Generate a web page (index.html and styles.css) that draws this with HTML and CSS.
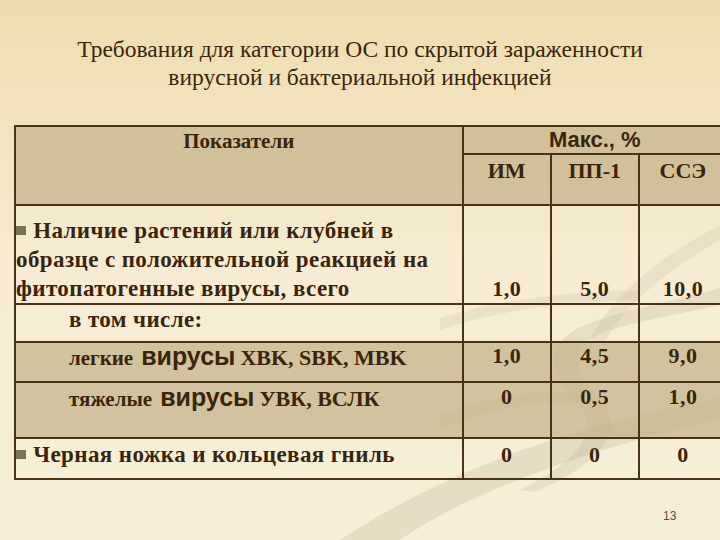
FILE: index.html
```html
<!DOCTYPE html>
<html lang="ru">
<head>
<meta charset="utf-8">
<link rel="stylesheet" href="styles.css">
</head>
<body>
<div class="slide">
  <svg class="swoosh" width="720" height="540" viewBox="0 0 720 540" aria-hidden="true">
    <path d="M340 540 C 430 480, 540 440, 620 420 C 670 408, 700 402, 720 396 L 720 418 C 690 426, 650 436, 610 448 C 530 472, 450 505, 400 540 Z" fill="#ab9f85" opacity="0.22"/>
    <path d="M720 288 C 680 300, 620 310, 585 325 C 545 342, 545 372, 575 400 C 600 425, 590 455, 520 490 L 535 492 C 610 460, 625 425, 600 398 C 572 370, 570 345, 605 332 C 640 320, 690 312, 720 305 Z" fill="#ab9f85" opacity="0.2"/>
    <path d="M440 318 C 500 300, 560 292, 640 290 L 640 300 C 560 302, 500 310, 440 330 Z" fill="#ab9f85" opacity="0.15"/>
    <path d="M590 340 C 610 300, 650 262, 720 225 L 720 240 C 665 272, 625 305, 605 342 Z" fill="#ab9f85" opacity="0.15"/>
    <path d="M440 415 C 490 395, 540 388, 580 395 L 578 405 C 540 400, 490 408, 440 430 Z" fill="#ab9f85" opacity="0.18"/>
  </svg>
  <h1 class="title">Требования для категории ОС по скрытой зараженности<br>вирусной и бактериальной инфекцией</h1>
  <table class="grid">
    <colgroup>
      <col class="c-name"><col class="c-val"><col class="c-val"><col class="c-val">
    </colgroup>
    <tr class="h1 tan">
      <td class="name head-name" rowspan="2">Показатели</td>
      <td class="maks" colspan="3">Макс., %</td>
    </tr>
    <tr class="h2 tan">
      <td class="hv">ИМ</td><td class="hv">ПП-1</td><td class="hv">ССЭ</td>
    </tr>
    <tr class="r1">
      <td class="name big r1-name"><span class="bullet"></span> Наличие растений или клубней в<br>образце с положительной реакцией на<br>фитопатогенные вирусы, всего</td>
      <td class="v v-bottom">1,0</td><td class="v v-bottom">5,0</td><td class="v v-bottom">10,0</td>
    </tr>
    <tr class="r2">
      <td class="name big indent">в том числе:</td>
      <td></td><td></td><td></td>
    </tr>
    <tr class="r3 tan">
      <td class="name indent"><span class="small">легкие</span> <span class="sans">вирусы</span> <span class="times">XBK, SBK, MBK</span></td>
      <td class="v">1,0</td><td class="v">4,5</td><td class="v">9,0</td>
    </tr>
    <tr class="r4 tan">
      <td class="name indent"><span class="small">тяжелые</span> <span class="sans">вирусы</span> <span class="times">УВК, ВСЛК</span></td>
      <td class="v">0</td><td class="v">0,5</td><td class="v">1,0</td>
    </tr>
    <tr class="r5">
      <td class="name big"><span class="bullet"></span> Черная ножка и кольцевая гниль</td>
      <td class="v">0</td><td class="v">0</td><td class="v">0</td>
    </tr>
  </table>
  <div class="page-num">13</div>
</div>
</body>
</html>
```

FILE: styles.css
```css
html, body {
  margin: 0;
  padding: 0;
}
body {
  width: 720px;
  height: 540px;
  overflow: hidden;
}
.slide {
  position: relative;
  width: 720px;
  height: 540px;
  overflow: hidden;
  background: linear-gradient(180deg, #eedcae 0%, #f3e5c2 25%, #f7ecd3 50%, #f8efd9 100%);
  color: #3a250c;
}
.swoosh {
  position: absolute;
  left: 0;
  top: 0;
}
.title {
  position: relative;
  margin: 0;
  padding-top: 35px;
  height: 125px;
  box-sizing: border-box;
  font-family: "Liberation Serif", "Times New Roman", serif;
  font-weight: normal;
  font-size: 23.5px;
  line-height: 28px;
  text-align: center;
  color: #3a250c;
}
.grid {
  position: relative;
  margin-left: 14px;
  width: 714px;
  border-collapse: collapse;
  table-layout: fixed;
  font-family: "Liberation Serif", "Times New Roman", serif;
  font-weight: bold;
  font-size: 20px;
  color: #3a250c;
}
.c-name { width: 447px; }
.c-val { width: 88px; }
.grid td {
  border: 2px solid #4a3216;
  padding: 0;
  vertical-align: top;
  line-height: 26px;
}
.tan td {
  background: rgba(196, 180, 140, 0.75);
}
.h1 { height: 28px; }
.h2 { height: 51px; }
.r1 { height: 98px; }
.r2 { height: 38px; }
.r3 { height: 40px; }
.r4 { height: 56px; }
.r5 { height: 41px; }
.grid td.head-name {
  text-align: center;
  padding-top: 1px;
  font-size: 21px;
  line-height: 26px;
}
.grid td.maks {
  font-family: "Liberation Sans", Arial, sans-serif;
  font-size: 22px;
  line-height: 26px;
  text-align: center;
}
.grid td.hv {
  text-align: center;
  padding-top: 3px;
  font-size: 22px;
  line-height: 26px;
}
.grid td.big {
  font-size: 23px;
  letter-spacing: 0.4px;
}
.grid td.r1-name {
  padding-top: 10px;
  line-height: 29px;
}
.bullet {
  display: inline-block;
  width: 10px;
  height: 9px;
  background: #7d7257;
  vertical-align: 3px;
  margin-right: 1px;
}
.grid td.indent {
  padding-left: 53px;
}
.r2 .name { line-height: 30px; }
.small {
  font-size: 21px;
  margin-right: 3px;
}
.sans {
  font-family: "Liberation Sans", Arial, sans-serif;
  font-size: 25px;
}
.times {
  font-size: 22px;
}
.grid .r3 td { padding-top: 0; line-height: 26px; }
.grid .r4 td { padding-top: 1px; line-height: 26px; }
.grid .r5 td { padding-top: 3px; line-height: 26px; }
.grid td.v {
  text-align: center;
  font-size: 22px;
  letter-spacing: 0.5px;
}
.grid td.v-bottom {
  vertical-align: bottom;
  padding-bottom: 1px;
}
.page-num {
  position: absolute;
  left: 663px;
  top: 509px;
  font-family: "Liberation Sans", Arial, sans-serif;
  font-size: 12px;
  color: #55503f;
}
```
